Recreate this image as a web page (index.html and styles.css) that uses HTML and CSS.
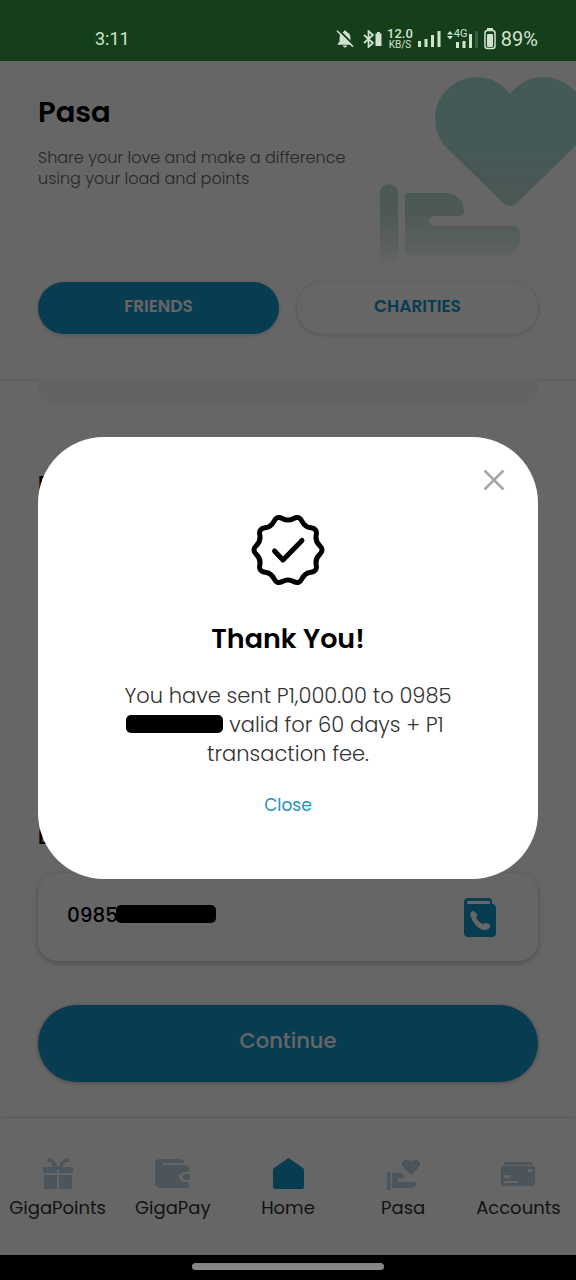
FILE: index.html
```html
<!DOCTYPE html>
<html lang="en">
<head>
<meta charset="utf-8">
<meta name="viewport" content="width=device-width, initial-scale=1">
<title>Pasa</title>
<link rel="stylesheet" href="styles.css">
</head>
<body>
<div class="phone">
  <div class="status">
    <span class="status-time">3:11</span>
    <div class="status-icons">
      <svg width="20" height="20" viewBox="0 0 20 20" aria-hidden="true">
        <path d="M10 1.5c.9 0 1.4.6 1.4 1.4 2.600.6 4 2.700 4 5.300v4.300l1.900 2.300v.9H2.700v-.9l1.900-2.300V8.200c0-2.600 1.400-4.700 4-5.300 0-.8.5-1.400 1.400-1.400zM8 16.600h4c0 1.200-.9 2-2 2s-2-.8-2-2z" fill="#cfe3cf"/>
        <path d="M3.500.8l17 17" stroke="#153f1b" stroke-width="2"/>
        <path d="M2 1.800l16 16" stroke="#cfe3cf" stroke-width="1.600"/>
      </svg>
      <svg class="bluetooth" width="19" height="18" viewBox="0 0 19 18" aria-hidden="true">
        <path d="M1 5l9 8-4.500 4V1L10 5l-9 8" fill="none" stroke="#cfe3cf" stroke-width="1.700"/>
        <path d="M14 2h3v1.500h1.500V16h-6V3.500H14z" fill="#cfe3cf"/>
      </svg>
      <span class="speed"><b>12.0</b><span>KB/S</span></span>
      <svg width="24" height="18" viewBox="0 0 24 18" fill="#cfe3cf" aria-hidden="true">
        <path d="M0 11h3v6H0zM6.500 9h3v8h-3zM13 5h3v12h-3zM19.500 1h3v16h-3z"/>
      </svg>
      <span class="mobile">
        <svg width="32" height="20" viewBox="0 0 32 20" fill="#cfe3cf" aria-hidden="true">
          <path d="M0 5.500L3 2l3 3.500zM0 7l3 3.500L6 7zM9 13h3v6H9zM15.500 12h3v7h-3zM22 5h3v14h-3z"/>
          <path d="M28 2h3v17h-3z" opacity=".2"/>
        </svg>
        <span class="mobile-type">4G</span>
      </span>
      <svg width="12" height="22" viewBox="0 0 12 22" aria-hidden="true">
        <path d="M3 0h6v2H3z" fill="#cfe3cf"/>
        <rect x="1" y="2.500" width="10" height="18" rx="2.500" fill="none" stroke="#cfe3cf" stroke-width="1.500"/>
        <rect x="3" y="6" width="6" height="13" rx="1" fill="#cfe3cf"/>
      </svg>
      <span class="percent">89%</span>
    </div>
  </div>

  <div class="screen">
    <header class="hero">
      <div class="intro">
        <div class="intro-text">
          <h1>Pasa</h1>
          <p>Share your love and make a difference<br>using your load and points</p>
        </div>
        <svg class="art" width="196" height="205" viewBox="20 0 196 205" fill="url(#fade)" aria-hidden="true">
          <defs>
            <linearGradient id="fade" gradientUnits="userSpaceOnUse" x1="0" y1="0" x2="0" y2="205">
              <stop offset="0" stop-color="#aae1d7"/>
              <stop offset=".4" stop-color="#aae1d7"/>
              <stop offset=".72" stop-color="#aacfc9" stop-opacity=".75"/>
              <stop offset=".92" stop-color="#c0dcdc" stop-opacity=".45"/>
              <stop offset="1" stop-color="#d5e8e6" stop-opacity="0"/>
            </linearGradient>
          </defs>
          <path d="M150 33A41.600 41.600 0 1 0 87 87L143 142Q150 148 157 142L213 87A41.600 41.600 0 1 0 150 33z"/>
          <path d="M20 132a9 9 0 0 1 18 0v72H20z"/>
          <path d="M49 132H86C96 132 104 140 104 150Q104 155 99 155H74A5 5 0 0 0 74 165H152Q160 165 160 173V179Q158 194 145 194H49Q45 194 45 190V136Q45 132 49 132z"/>
        </svg>
      </div>
      <div class="tabs">
        <button class="tab tab-active" type="button">FRIENDS</button>
        <button class="tab" type="button">CHARITIES</button>
      </div>
    </header>

    <main class="form">
      <div class="strip"></div>
      <h2 class="section">E</h2>
      <label class="section section-number" for="number">E</label>
      <div class="field">
        <input id="number" type="tel" value="0985">
        <span class="redact redact-field"></span>
        <button class="contacts" type="button" aria-label="Contacts">
          <svg width="32" height="39" viewBox="0 0 32 39" aria-hidden="true">
            <path d="M4 0H24Q28 0 28 4V6H29Q32 7 32 10V35Q32 39 28 39H4Q0 39 0 35V4Q0 0 4 0z" fill="#1496c8"/>
            <rect x="3" y="3" width="23" height="3" rx="1" fill="#fff"/>
            <path d="M9 13C6 14 6 17 7 19C9 25 14 31 20 32C23 32 26 31 26 28C26 27 26 27 25 26L22 25Q20 25 19 26C16 25 13 22 12 19Q14 18 13 16L11 14Q10 13 9 13z" fill="#fff"/>
          </svg>
        </button>
      </div>
      <button class="continue" type="button">Continue</button>
    </main>

    <nav class="nav">
      <a href="#points">
        <svg width="32" height="32" viewBox="0 0 32 32" aria-hidden="true">
          <path d="M2 9h28q1 0 1 1v5H17V9h-2v6H1v-5q0-1 1-1zM2 17h13v14H3q-1 0-1-1zM17 17h13v13q0 1-1 1H17z"/>
          <path d="M7 2q5 2 7 8M25 2q-5 2-7 8" fill="none" stroke="#bed4e3" stroke-width="4" stroke-linecap="round"/>
        </svg>
        <span>GigaPoints</span>
      </a>
      <a href="#pay">
        <svg width="36" height="32" viewBox="0 0 36 32" aria-hidden="true">
          <path d="M5 1H25Q29 1 29 5H8V7H31Q34 7 34 10V14H31Q24 14 24 19Q24 24 31 24H34V27Q34 30 31 30H5Q0 30 0 25V6Q0 1 5 1z"/>
          <path d="M31 16H35V22H31Q28 22 28 19Q28 16 31 16z"/>
        </svg>
        <span>GigaPay</span>
      </a>
      <a class="current" href="#home">
        <svg width="32" height="32" viewBox="0 0 32 32" aria-hidden="true">
          <path d="M16.500 0L31 10Q32 11 32 12V29Q32 31 30 31H3Q1 31 1 29V12Q1 11 2 10z"/>
        </svg>
        <span>Home</span>
      </a>
      <a href="#pasa">
        <svg width="34" height="32" viewBox="0 0 34 32" aria-hidden="true">
          <path d="M25 4C22 0 15 2 16 7Q17 10 25 17Q33 10 34 7C34 2 28 0 25 4z"/>
          <path d="M1 14H4.500V32H1zM6 15H14Q18 15 18 20H13Q10 22 13 24H30Q31 28 27 30H6z"/>
        </svg>
        <span>Pasa</span>
      </a>
      <a href="#accounts">
        <svg width="34" height="32" viewBox="0 0 34 32" aria-hidden="true">
          <path d="M5 4H30Q31 4 31 6V7H3V6Q3 4 5 4z"/>
          <path fill-rule="evenodd" d="M2 8H32Q34 8 34 10V26Q34 28 32 28H2Q0 28 0 26V10Q0 8 2 8zM3 17V20H9Q11 18 9 17zM3 23V25H17V23zM27 11V14H31V11z"/>
        </svg>
        <span>Accounts</span>
      </a>
    </nav>

    <div class="backdrop">
      <section class="dialog" role="dialog" aria-modal="true" aria-labelledby="thanks">
        <button class="dismiss" type="button" aria-label="Dismiss">
          <svg width="22" height="22" viewBox="0 0 22 22" aria-hidden="true">
            <path d="M1.500 1.500l19 19M20.500 1.500l-19 19" stroke="#a6a6a6" stroke-width="2.500"/>
          </svg>
        </button>
        <svg class="badge" width="74" height="74" viewBox="-37 -37 74 74" fill="none" stroke="#000" stroke-width="5" stroke-linejoin="round" stroke-linecap="round" aria-hidden="true">
          <path d="M31.700-4.390Q36.400 0 31.700 4.390Q27.010 8.780 28.230 15.090Q29.450 21.400 23.070 22.190Q16.690 22.980 13.970 28.800Q11.250 34.620 5.630 31.510Q0 28.400-5.630 31.510Q-11.250 34.620-13.970 28.800Q-16.690 22.980-23.070 22.190Q-29.450 21.400-28.230 15.090Q-27.010 8.780-31.700 4.390Q-36.400 0-31.700-4.390Q-27.010-8.780-28.230-15.090Q-29.450-21.400-23.070-22.190Q-16.690-22.980-13.970-28.800Q-11.250-34.620-5.630-31.510Q0-28.400 5.630-31.510Q11.250-34.620 13.970-28.800Q16.690-22.980 23.070-22.190Q29.450-21.400 28.230-15.090Q27.010-8.780 31.700-4.390z"/>
          <path d="M-13.500 1l8.500 9L14-9.500"/>
        </svg>
        <h2 id="thanks">Thank You!</h2>
        <p>You have sent P1,000.00 to 0985<br><span class="redact"></span> valid for 60 days + P1&nbsp;<br>transaction fee.</p>
        <button class="close" type="button">Close</button>
      </section>
    </div>
  </div>

  <div class="gesture"><span></span></div>
</div>
</body>
</html>
```
FILE: styles.css
```css
* { box-sizing: border-box; }

body {
  margin: 0;
  background: #fff;
  font-family: Poppins, Inter, "Open Sans", sans-serif;
  color: #000;
}

h1, h2, p { margin: 0; }

button, input {
  font: inherit;
  color: inherit;
  border: 0;
  padding: 0;
  background: none;
}

.phone {
  display: flex;
  flex-direction: column;
  min-height: 100vh;
}

/* Status bar */
.status {
  display: flex;
  align-items: center;
  justify-content: space-between;
  height: 61px;
  padding: 16px 38px 0 95px;
  background: #153f1b;
  color: #cfe3cf;
  font-family: Roboto, sans-serif;
  font-size: 20px;
}

.status-time { font-size: 18px; }

.status-icons {
  display: flex;
  align-items: center;
  gap: 5px;
}

.bluetooth { margin-left: 3px; }

.speed {
  display: flex;
  flex-direction: column;
  align-items: center;
  font-size: 10px;
  line-height: 10px;
}

.speed b {
  font-size: 13px;
  font-weight: 500;
  line-height: 13px;
}

.mobile { position: relative; display: flex; }

.mobile-type {
  position: absolute;
  top: 0;
  left: 7px;
  background: #153f1b;
  font-size: 11px;
  line-height: 10px;
}

/* Screen */
.screen {
  position: relative;
  display: flex;
  flex: 1;
  flex-direction: column;
}

.hero {
  padding: 0 38px 45px;
  box-shadow: 0 1px 3px rgba(0, 0, 0, .12);
}

.intro {
  display: flex;
  justify-content: space-between;
  margin-right: -38px;
}

.intro-text {
  flex: 1;
  padding-top: 33px;
  white-space: nowrap;
}

.art { flex: none; margin-left: -40px; }

h1 {
  font-size: 29px;
  font-weight: 600;
  line-height: 36px;
}

.intro p {
  margin-top: 17px;
  color: #5c6466;
  font-size: 16px;
  font-weight: 300;
  line-height: 21px;
}

.tabs {
  display: grid;
  grid-template-columns: 1fr 1fr;
  gap: 18px;
  margin-top: 16px;
}

.tab {
  height: 52px;
  padding-bottom: 4px;
  border-radius: 26px;
  background: #fff;
  box-shadow: 0 1px 4px rgba(0, 0, 0, .2);
  color: #1496c8;
  font-size: 17px;
  font-weight: 600;
}

.tab-active { background: #1496c8; color: #fff; }

.form {
  display: flex;
  flex: 1;
  flex-direction: column;
  padding: 0 38px 34px;
}

.strip {
  height: 24px;
  border-radius: 0 0 16px 16px;
  background: #f2f9f7;
}

.section {
  margin-top: 66px;
  font-size: 20px;
  font-weight: 600;
  line-height: 28px;
}

.section-number { margin-top: 326px; }

.field {
  position: relative;
  display: flex;
  align-items: center;
  height: 88px;
  margin-top: 22px;
  padding: 0 42px 0 29px;
  border-radius: 20px;
  box-shadow: 0 2px 6px rgba(0, 0, 0, .25);
}

.field input {
  flex: 1;
  min-width: 0;
  height: 48px;
  padding-bottom: 4px;
  font-size: 20px;
  font-weight: 500;
}

.redact {
  display: inline-block;
  width: 97px;
  height: 18px;
  border-radius: 5px;
  background: #000;
  vertical-align: -1px;
}

.redact-field {
  position: absolute;
  top: 32px;
  left: 78px;
  width: 100px;
}

.contacts { display: flex; }

.continue {
  height: 77px;
  margin-top: 44px;
  padding-bottom: 6px;
  border-radius: 39px;
  background: #1496c8;
  box-shadow: 0 1px 4px rgba(0, 0, 0, .3);
  color: #fff;
  font-size: 21px;
  font-weight: 500;
}

.nav {
  display: grid;
  grid-template-columns: repeat(5, 1fr);
  height: 136px;
  padding-top: 39px;
  box-shadow: 0 -2px 4px rgba(0, 0, 0, .1);
}

.nav a {
  display: flex;
  flex-direction: column;
  align-items: center;
  gap: 6px;
  color: #303030;
  font-size: 18px;
  line-height: 24px;
  text-decoration: none;
}

.nav svg { fill: #bed4e3; }
.nav .current svg { fill: #1496c8; }

/* Dialog */
.backdrop {
  position: absolute;
  inset: 0;
  display: grid;
  align-items: center;
  padding: 0 38px;
  background: rgba(0, 0, 0, .6);
}

.dialog {
  position: relative;
  display: flex;
  flex-direction: column;
  align-items: center;
  padding: 76px 40px 61px;
  border-radius: 66px;
  background: #fff;
  text-align: center;
}

.dismiss {
  position: absolute;
  top: 32px;
  right: 33px;
  display: flex;
}

.dialog h2 {
  margin-top: 34px;
  font-size: 27px;
  font-weight: 600;
  line-height: 36px;
}

.dialog p {
  margin-top: 24px;
  color: #333;
  font-size: 21px;
  font-weight: 300;
  line-height: 29px;
}

.close {
  margin-top: 24px;
  color: #1f93bb;
  font-size: 17px;
  line-height: 26px;
}

.gesture {
  display: flex;
  align-items: center;
  justify-content: center;
  height: 25px;
  padding-bottom: 3px;
  background: #000;
}

.gesture span {
  width: 33.333%;
  height: 7px;
  border-radius: 4px;
  background: #858585;
}
```
